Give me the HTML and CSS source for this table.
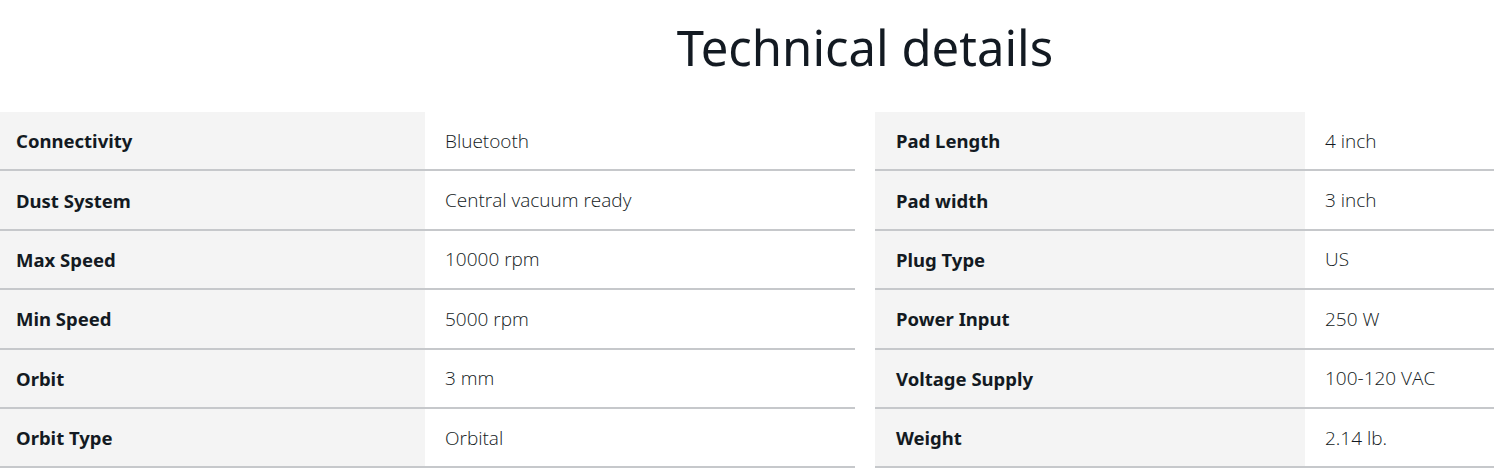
FILE: index.html
```html
<!DOCTYPE html>
<html lang="en">
<head>
<meta charset="utf-8">
<title>Technical details</title>
<link rel="stylesheet" href="styles.css">
</head>
<body>
<div class="page">
  <h2 class="title">Technical details</h2>
  <div class="tables">
    <table class="spec">
      <tr><th>Connectivity</th><td>Bluetooth</td></tr>
      <tr><th>Dust System</th><td>Central vacuum ready</td></tr>
      <tr><th>Max Speed</th><td>10000 rpm</td></tr>
      <tr><th>Min Speed</th><td>5000 rpm</td></tr>
      <tr><th>Orbit</th><td>3 mm</td></tr>
      <tr><th>Orbit Type</th><td>Orbital</td></tr>
    </table>
    <table class="spec spec-right">
      <tr><th>Pad Length</th><td>4 inch</td></tr>
      <tr><th>Pad width</th><td>3 inch</td></tr>
      <tr><th>Plug Type</th><td>US</td></tr>
      <tr><th>Power Input</th><td>250 W</td></tr>
      <tr><th>Voltage Supply</th><td>100-120 VAC</td></tr>
      <tr><th>Weight</th><td>2.14 lb.</td></tr>
    </table>
  </div>
</div>
</body>
</html>
```
FILE: styles.css
```css
html, body {
  margin: 0;
  padding: 0;
  background: #fff;
  overflow: hidden;
}
.page {
  width: 1730px;
  font-family: "Open Sans", "Noto Sans", sans-serif;
  color: #131a22;
}
.title {
  margin: 0;
  padding-top: 17px;
  height: 112px;
  box-sizing: border-box;
  text-align: center;
  font-family: "Noto Sans", "Open Sans", sans-serif;
  font-weight: 400;
  font-size: 49px;
  line-height: 60px;
}
.tables {
  display: flex;
  gap: 20px;
}
.spec {
  width: 855px;
  border-collapse: collapse;
  table-layout: fixed;
}
.spec tr {
  border-bottom: 2px solid #c6c8cb;
}
.spec th,
.spec td {
  height: 57.4px;
  padding: 0;
  vertical-align: middle;
  text-align: left;
}
.spec th {
  width: 425px;
  background: #f4f4f4;
  padding-left: 16px;
  box-sizing: border-box;
  font-family: "Noto Sans", sans-serif;
  font-weight: 700;
  font-size: 18.5px;
}
.spec td {
  padding-left: 20px;
  font-weight: 300;
  font-size: 19px;
}
.spec-right th {
  width: 430px;
  padding-left: 21px;
}
```
